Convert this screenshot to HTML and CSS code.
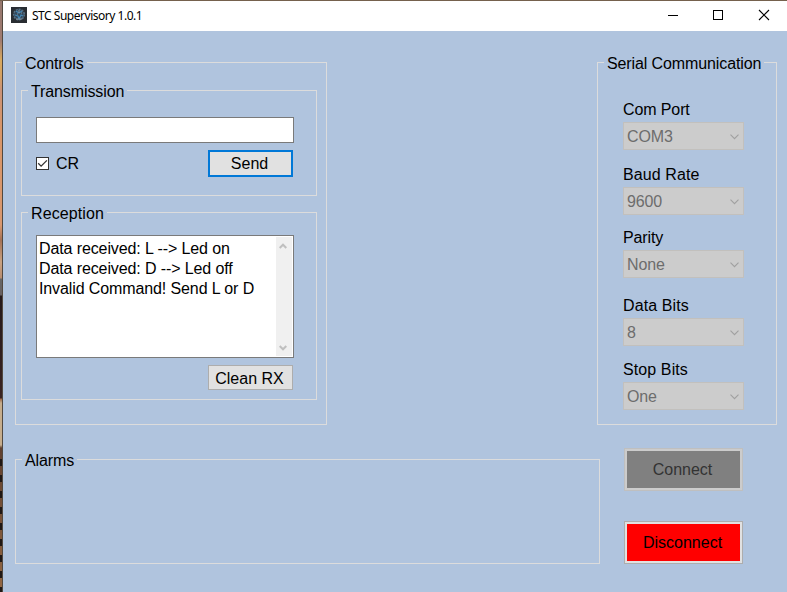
FILE: index.html
```html
<!DOCTYPE html>
<html lang="en">
<head>
<meta charset="utf-8">
<title>STC Supervisory 1.0.1</title>
<link rel="stylesheet" href="styles.css">
</head>
<body>
<div class="window">
  <header class="titlebar">
    <svg class="app-icon" width="16" height="16" viewBox="0 0 16 16">
      <rect width="16" height="16" fill="#292d32"/>
      <circle cx="8" cy="7.5" r="5.3" fill="#34495c" stroke="#587084" stroke-width="1.5" stroke-dasharray="2 1"/>
      <path d="M5 4l3 2 3-2M4 8l3 1 1 3 2-4 2 1" fill="none" stroke="#4387b5" stroke-width="1.2"/>
      <path d="M8 3v3M6 7h1M10 6h1M5 12h6" stroke="#8695a0"/>
    </svg>
    <h1 class="title">STC Supervisory 1.0.1</h1>
    <svg class="window-controls" width="110" height="30" viewBox="0 0 110 30" fill="none" stroke="#000" shape-rendering="crispEdges">
      <path d="M5 14.5h10"/>
      <rect x="50.5" y="9.5" width="9" height="9"/>
      <path d="M96 9l10 10M106 9l-10 10" shape-rendering="auto" stroke-width="1.1"/>
    </svg>
  </header>
  <main class="client">
    <div class="top-row">
      <section class="group controls">
        <h2 class="legend">Controls</h2>
        <section class="group transmission">
          <h2 class="legend">Transmission</h2>
          <div class="textbox"></div>
          <div class="send-row">
            <div class="check">
              <svg width="13" height="13" viewBox="0 0 13 13" fill="none"><rect x=".5" y=".5" width="12" height="12" fill="#fff" stroke="#333"/><path d="M2.2 6.3l2.9 2.9 5.8-5.8" stroke="#333" stroke-width="1.3"/></svg>
              <span>CR</span>
            </div>
            <div class="button send">Send</div>
          </div>
        </section>
        <section class="group reception">
          <h2 class="legend">Reception</h2>
          <div class="log">
            <div class="lines">
              <p>Data received: L --&gt; Led on</p>
              <p>Data received: D --&gt; Led off</p>
              <p>Invalid Command! Send L or D</p>
            </div>
            <div class="scrollbar">
              <svg width="8" height="6" viewBox="0 0 8 6"><path d="M.7 5L4 1.7 7.3 5" fill="none" stroke="#bfbfbf" stroke-width="2"/></svg>
              <svg width="8" height="6" viewBox="0 0 8 6"><path d="M.7 1L4 4.3 7.3 1" fill="none" stroke="#bfbfbf" stroke-width="2"/></svg>
            </div>
          </div>
          <div class="button clean">Clean RX</div>
        </section>
      </section>
      <section class="group serial">
        <h2 class="legend">Serial Communication</h2>
        <div class="field port"><span class="label">Com Port</span><div class="combo">COM3<svg width="9" height="6" viewBox="0 0 9 6"><path d="M.5 .7l4 4 4-4" fill="none" stroke="#a0a0a0" stroke-width="1.1"/></svg></div></div>
        <div class="field baud"><span class="label">Baud Rate</span><div class="combo">9600<svg width="9" height="6" viewBox="0 0 9 6"><path d="M.5 .7l4 4 4-4" fill="none" stroke="#a0a0a0" stroke-width="1.1"/></svg></div></div>
        <div class="field parity"><span class="label">Parity</span><div class="combo">None<svg width="9" height="6" viewBox="0 0 9 6"><path d="M.5 .7l4 4 4-4" fill="none" stroke="#a0a0a0" stroke-width="1.1"/></svg></div></div>
        <div class="field data"><span class="label">Data Bits</span><div class="combo">8<svg width="9" height="6" viewBox="0 0 9 6"><path d="M.5 .7l4 4 4-4" fill="none" stroke="#a0a0a0" stroke-width="1.1"/></svg></div></div>
        <div class="field stop"><span class="label">Stop Bits</span><div class="combo">One<svg width="9" height="6" viewBox="0 0 9 6"><path d="M.5 .7l4 4 4-4" fill="none" stroke="#a0a0a0" stroke-width="1.1"/></svg></div></div>
      </section>
    </div>
    <div class="bottom-row">
      <section class="group alarms"><h2 class="legend">Alarms</h2></section>
      <div class="actions">
        <div class="action connect"><span>Connect</span></div>
        <div class="action disconnect"><span>Disconnect</span></div>
      </div>
    </div>
  </main>
</div>
</body>
</html>
```

FILE: styles.css
```css
* { box-sizing: border-box; }
h1, h2, p { margin: 0; font-weight: normal; font-size: inherit; }
svg { display: block; flex: none; }

body {
  margin: 0;
  width: 787px;
  height: 592px;
  overflow: hidden;
  padding: 1px 0 0 3px;
  font: 16px/18px "Liberation Sans", Arial, sans-serif;
  letter-spacing: -0.11px;
  color: #000;
  background:
    linear-gradient(#75614d, #75614d) 0 0 / 100% 1px no-repeat,
    linear-gradient(#51483f, #51483f) 2px 0 / 1px 100% no-repeat,
    repeating-linear-gradient(transparent 0 9px, #201815 9px 16px) 0 450px / 2px 142px no-repeat,
    linear-gradient(#96776d 0, #a07b70 40px, #d8a95f 60px, #d6a261 75px, #cb9377 90px, #d99668 130px, #d9986f 225px, #a57255 240px, #c9a281 262px, #b88d70 278px, #666 279px, #686060 295px, #251a1b 296px, #3a2422 398px, #9d6848 399px, #c6ad8c 403px, #c6ad8c 445px, #60402f 448px, #946844 592px);
}

.window { height: 591px; display: flex; flex-direction: column; background: #b0c4de; }
.titlebar { height: 30px; display: flex; align-items: center; padding-left: 8px; background: #fff; }
.app-icon { margin-bottom: 2px; }
.title { margin-left: 5px; font: 12px/16px "Noto Sans", sans-serif; letter-spacing: -0.48px; }
.window-controls { margin-left: auto; margin-right: 14px; }

.client { flex: 1; padding: 31px 10px 0 12px; }
.top-row { display: flex; justify-content: space-between; height: 363px; }
.bottom-row { display: flex; align-items: flex-end; gap: 24px; height: 116px; margin-top: 23px; }

.group { border: 1px solid #dcdcdc; display: flex; flex-direction: column; }
.legend {
  align-self: flex-start;
  height: 18px;
  margin: -9px 0 0 6px;
  padding: 0 3px;
  line-height: 20px;
  background: #b0c4de;
  white-space: nowrap;
}
.controls { width: 312px; padding-left: 5px; padding-right: 9px; }
.controls > .legend { margin-left: 1px; }
.transmission { height: 106px; margin-top: 18px; padding-right: 22px; }
.reception { height: 188px; margin-top: 16px; padding-right: 22px; }
.reception > .legend { letter-spacing: 0.1px; }

.textbox { height: 26px; margin: 17px 0 0 14px; border: 1px solid #7a7a7a; background: #fff; }
.send-row { display: flex; justify-content: space-between; align-items: center; margin: 7px 0 0 14px; padding-right: 1px; }
.check { display: flex; align-items: center; gap: 7px; }
.button { width: 85px; padding-right: 2px; background: #e1e1e1; text-align: center; white-space: nowrap; letter-spacing: 0; }
.send { height: 27px; line-height: 23px; border: 2px solid #0078d7; }
.clean { height: 25px; line-height: 25px; border: 1px solid #adadad; align-self: flex-end; margin: 7px 1px 0 0; }

.log {
  display: flex;
  justify-content: space-between;
  height: 123px;
  margin: 13px 0 0 14px;
  padding: 1px;
  border: 1px solid #7a7a7a;
  background: #fff;
}
.lines { padding: 2px 0 0 1px; line-height: 20px; white-space: nowrap; }
.scrollbar {
  width: 16px;
  display: flex;
  flex-direction: column;
  justify-content: space-between;
  align-items: flex-start;
  padding: 6px 0 5px 3px;
  background: #f0f0f0;
}

.serial { width: 180px; }
.field { width: 121px; margin-left: 25px; }
.label { display: block; height: 22px; line-height: 20px; }
.baud .label, .data .label, .stop .label { letter-spacing: 0.1px; }
.combo {
  display: flex;
  justify-content: space-between;
  height: 28px;
  line-height: 27px;
  margin-bottom: -1px;
  padding: 0 4px 0 3px;
  border: 1px solid #c2c0bd;
  background: #ccc;
  color: #6d6d6d;
}
.combo svg { margin-top: 11px; }
.port { margin-top: 28px; }
.baud { margin-top: 16px; }
.parity { margin-top: 14px; }
.data { margin-top: 19px; }
.stop { margin-top: 15px; }

.alarms { width: 585px; height: 105px; }
.actions { display: flex; flex-direction: column; gap: 30px; }
.action {
  width: 119px;
  height: 43px;
  padding: 2px;
  line-height: 37px;
  text-align: center;
  letter-spacing: 0;
  background-clip: content-box;
}
.action span { margin-right: 2px; }
.connect { border: 1px solid #bfbfbf; background-color: #808080; box-shadow: inset 0 0 0 2px #ccc; color: #333; }
.disconnect { border: 1px solid #adadad; background-color: #f00; box-shadow: inset 0 0 0 2px #e1e1e1; }
```
